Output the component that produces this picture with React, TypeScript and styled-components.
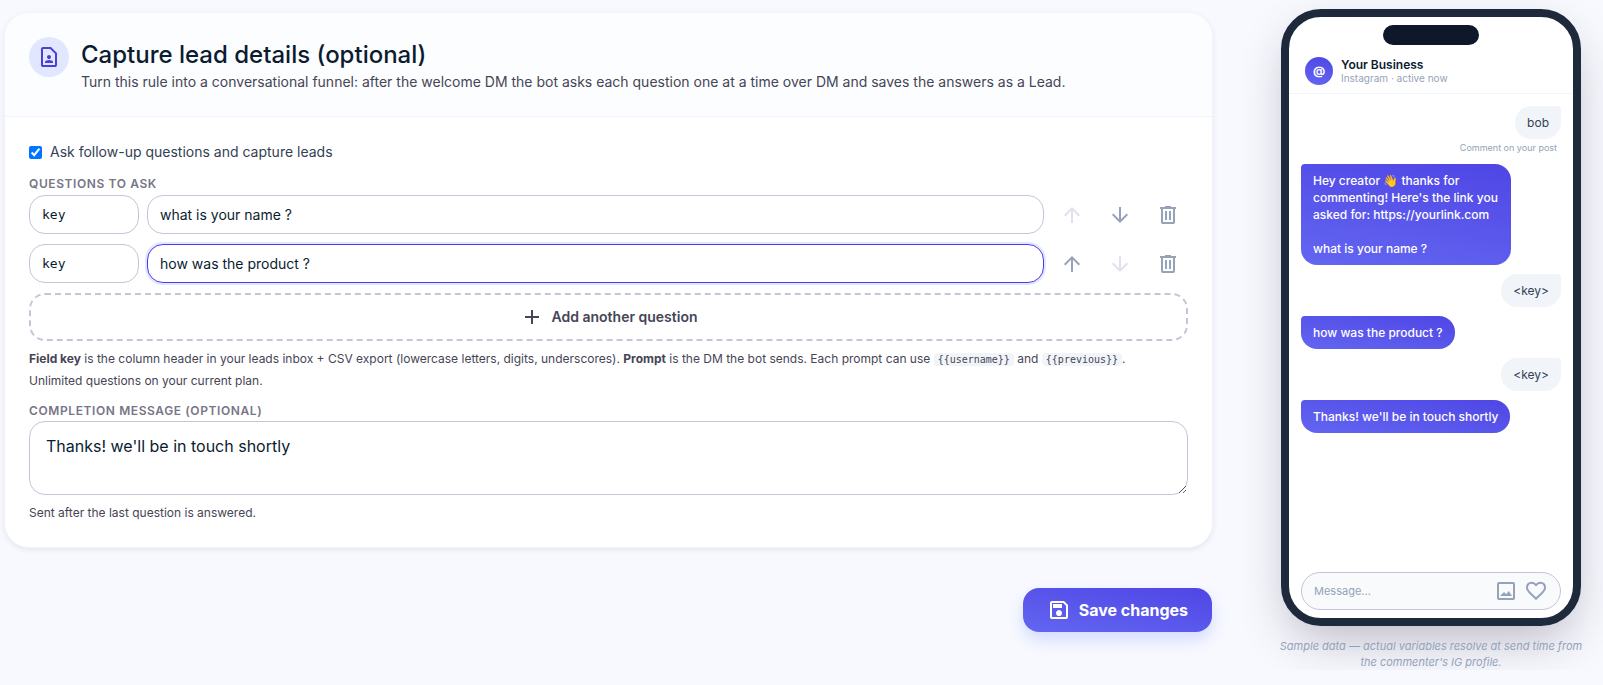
import React, { useState } from "react";
import styled, { createGlobalStyle, css } from "styled-components";

const GlobalStyle = createGlobalStyle`
  *, *::before, *::after { box-sizing: border-box; }
  body {
    margin: 0;
    background: #f8f9ff;
    color: #0b1c30;
    font-family: Inter, "Liberation Sans", sans-serif;
    font-size: 14px;
    line-height: 20px;
  }
  input, textarea, button { font: inherit; color: inherit; }
`;

const icons = {
  contact:
    "M480-400q33 0 56.500-23.500T560-480q0-33-23.500-56.500T480-560q-33 0-56.500 23.500T400-480q0 33 23.500 56.500T480-400ZM320-240h320v-23q0-24-13-44t-36-30q-26-11-53.500-17t-57.500-6q-30 0-57.500 6T369-337q-23 10-36 30t-13 44v23ZM720-80H240q-33 0-56.500-23.500T160-160v-640q0-33 23.500-56.500T240-880h320l240 240v480q0 33-23.500 56.500T720-80Zm0-80v-446L526-800H240v640h480Z",
  up: "M440-160v-487L216-423l-56-57 320-320 320 320-56 57-224-224v487h-80Z",
  down: "M440-800v487L216-537l-56 57 320 320 320-320-56-57-224 224v-487h-80Z",
  trash:
    "M280-120q-33 0-56.500-23.500T200-200v-520h-40v-80h200v-40h240v40h200v80h-40v520q0 33-23.500 56.500T680-120H280Zm400-600H280v520h400v-520ZM360-280h80v-360h-80v360Zm160 0h80v-360h-80v360Z",
  add: "M440-440H200v-80h240v-240h80v240h240v80H520v240h-80v-240Z",
  save: "M840-680v480q0 33-23.500 56.500T760-120H200q-33 0-56.500-23.500T120-200v-560q0-33 23.500-56.500T200-840h480l160 160Zm-80 34L646-760H200v560h560v-446ZM480-240q50 0 85-35t35-85q0-50-35-85t-85-35q-50 0-85 35t-35 85q0 50 35 85t85 35ZM240-560h360v-160H240v160Z",
  image:
    "M200-120q-33 0-56.500-23.500T120-200v-560q0-33 23.500-56.500T200-840h560q33 0 56.500 23.500T840-760v560q0 33-23.500 56.500T760-120H200Zm0-80h560v-560H200v560Zm40-80h480L590-480l-100 130-90-90-160 160Z",
  heart:
    "m480-120-58-52q-101-91-167-157T150-447.500Q111-500 95.500-544T80-634q0-94 63-157t157-63q52 0 99 22t81 62q34-40 81-62t99-22q94 0 157 63t63 157q0 46-15.500 90T810-447.500Q771-395 705-329T538-172l-58 52Zm0-108q96-86 158-147.500t98-107q36-45.500 50-81t14-70.500q0-60-40-100t-100-40q-47 0-87 26.500T518-680h-76q-15-41-55-67.500T300-774q-60 0-100 40t-40 100q0 35 14 70.500t50 81q36 45.500 98 107T480-228Z",
};

const Icon = ({ name, size = 24 }: { name: keyof typeof icons; size?: number }) => (
  <svg width={size} height={size} viewBox="0 -960 960 960" fill="currentColor" aria-hidden="true">
    <path d={icons[name]} />
  </svg>
);

const Page = styled.div`
  display: flex;
  align-items: flex-start;
  gap: 69px;
  padding: 9px 22px 0 5px;
`;

const Main = styled.main`
  flex: 1;
  min-width: 0;
  display: flex;
  flex-direction: column;
  gap: 41px;
  padding-top: 4px;
`;

const Card = styled.section`
  border-radius: 24px;
  background: #ffffff;
  overflow: hidden;
  box-shadow: 0 0 0 1px #f1f5fb, 0 2px 6px rgba(15, 23, 42, 0.1);
`;

const CardHeader = styled.header`
  display: flex;
  gap: 12px;
  padding: 24px;
  background: #fcfdff;
  border-bottom: 1px solid #eff3fb;
`;

const HeaderIcon = styled.span`
  flex: none;
  display: grid;
  place-items: center;
  width: 40px;
  height: 40px;
  border-radius: 50%;
  background: #e0e7ff;
  color: #4d3fd6;
`;

const Title = styled.h2`
  margin: 0;
  font-size: 24px;
  font-weight: 500;
  line-height: 35px;
`;

const Subtitle = styled.p`
  margin: 0;
  color: #464555;
`;

const CardBody = styled.div`
  display: flex;
  flex-direction: column;
  padding: 23px 24px 24px;
`;

const CheckRow = styled.label`
  display: flex;
  align-items: center;
  gap: 8px;
  height: 24px;
  color: #334155;

  input {
    width: 13px;
    height: 13px;
    margin: 0;
  }
`;

const FieldLabel = styled.label`
  font-size: 12px;
  font-weight: 600;
  letter-spacing: 0.05em;
  line-height: 16px;
  text-transform: uppercase;
  color: #777587;
`;

const Fieldset = styled.div`
  display: flex;
  flex-direction: column;
  margin-top: 12px;
`;

const QuestionList = styled.div`
  display: flex;
  flex-direction: column;
  gap: 10px;
  margin: 3px 0 10px;
`;

const QuestionRow = styled.div`
  display: flex;
  gap: 8px;
`;

const fieldBox = css`
  border: 1px solid #c7c4d8;
  border-radius: 16px;
  background: #ffffff;
  outline: none;

  &:focus {
    border-color: #4f39f0;
    box-shadow: 0 0 0 2px #e0e7ff;
  }
`;

const TextField = styled.input<{ $mono?: boolean }>`
  ${fieldBox}
  height: 39px;
  padding: 0 12px;
  min-width: 0;
  ${(p) =>
    p.$mono
      ? css`
          width: 110px;
          font-family: "DejaVu Sans Mono", monospace;
          font-size: 13px;
        `
      : css`
          flex: 1;
        `}
`;

const IconButton = styled.button`
  display: grid;
  place-items: center;
  width: 40px;
  height: 40px;
  margin-bottom: -1px;
  padding: 0;
  border: 0;
  background: none;
  color: #94a3b8;
  cursor: pointer;

  &:disabled {
    opacity: 0.3;
    cursor: default;
  }
`;

const AddButton = styled.button`
  display: flex;
  align-items: center;
  justify-content: center;
  gap: 8px;
  height: 48px;
  border: 2px dashed #c7c4d8;
  border-radius: 16px;
  background: none;
  color: #464555;
  font-weight: 600;
  cursor: pointer;
`;

const Help = styled.p`
  margin: 7px 0 0;
  color: #464555;
  font-size: 12px;
  line-height: 21px;
`;

const Code = styled.code`
  padding: 1px 4px;
  border-radius: 4px;
  background: #f1f5f9;
  font-family: "DejaVu Sans Mono", monospace;
  font-size: 10px;
`;

const MessageArea = styled.textarea`
  ${fieldBox}
  display: block;
  height: 74px;
  margin-top: 2px;
  padding: 12px 16px;
  font-size: 16px;
  line-height: 24px;
  resize: vertical;
`;

const SaveButton = styled.button`
  align-self: flex-end;
  display: flex;
  align-items: center;
  gap: 8px;
  height: 44px;
  padding: 0 24px;
  border: 0;
  border-radius: 16px;
  background: linear-gradient(10deg, #6366f1, #4f46e5);
  box-shadow: 0 8px 16px #d3dbff;
  color: #ffffff;
  font-size: 16px;
  font-weight: 700;
  cursor: pointer;
`;

const Preview = styled.aside`
  flex: none;
  width: 300px;
`;

const Phone = styled.div`
  display: flex;
  flex-direction: column;
  min-height: 617px;
  border: 8px solid #1e293b;
  border-radius: 40px;
  background: #ffffff;
  box-shadow: 0 20px 50px -10px rgba(30, 20, 40, 0.3);
`;

const Notch = styled.div`
  align-self: center;
  width: 96px;
  height: 20px;
  margin-top: 8px;
  border-radius: 10px;
  background: #0f172a;
`;

const ChatHeader = styled.div`
  display: flex;
  align-items: center;
  gap: 8px;
  padding: 12px 16px 8px;
  border-bottom: 1px solid #f1f5f9;
`;

const Avatar = styled.span`
  display: grid;
  place-items: center;
  width: 28px;
  height: 28px;
  border-radius: 50%;
  background: linear-gradient(10deg, #6366f1, #4f46e5);
  color: #ffffff;
  font-size: 12px;
  font-weight: 700;
`;

const Business = styled.div`
  font-size: 12px;
  font-weight: 600;
  line-height: 15px;
`;

const Status = styled.div`
  color: #94a3b8;
  font-size: 10px;
  line-height: 13px;
`;

const Chat = styled.div`
  flex: 1;
  display: flex;
  flex-direction: column;
  gap: 9px;
  padding: 12px;
`;

const Bubble = styled.div<{ $sent?: boolean }>`
  max-width: 210px;
  padding: 8px 12px;
  font-size: 12px;
  line-height: 17px;
  white-space: pre-line;
  ${(p) =>
    p.$sent
      ? css`
          align-self: flex-start;
          border-radius: 4px 16px 16px 16px;
          background: linear-gradient(10deg, #6366f1, #4f46e5);
          color: #ffffff;
          font-weight: 500;
        `
      : css`
          align-self: flex-end;
          border-radius: 16px 4px 16px 16px;
          background: #f1f5f9;
          color: #334155;
        `}
`;

const BubbleGroup = styled.div`
  display: flex;
  flex-direction: column;
`;

const BubbleNote = styled.span`
  align-self: flex-end;
  padding: 3px 4px 1px;
  color: #94a3b8;
  font-size: 9px;
  line-height: 12px;
`;

const Composer = styled.div`
  display: flex;
  align-items: center;
  gap: 6px;
  height: 38px;
  margin: 0 12px 8px;
  padding: 0 12px;
  border: 1px solid #c7c4d8;
  border-radius: 19px;
  background: #f8fafc;
  color: #94a3b8;

  input {
    flex: 1;
    min-width: 0;
    padding: 0;
    border: 0;
    outline: none;
    background: none;
    font-size: 11px;
  }

  input::placeholder { color: #94a3b8; }
`;

const Disclaimer = styled.p`
  margin: 12px -4px 0;
  color: #94a3b8;
  font-size: 11px;
  font-style: italic;
  line-height: 16px;
  text-align: center;
`;

type Question = { id: number; key: string; prompt: string };

export default function App() {
  const [enabled, setEnabled] = useState(true);
  const [completion, setCompletion] = useState("Thanks! we'll be in touch shortly");
  const [questions, setQuestions] = useState<Question[]>([
    { id: 1, key: "key", prompt: "what is your name ?" },
    { id: 2, key: "key", prompt: "how was the product ?" },
  ]);

  const update = (id: number, patch: Partial<Question>) =>
    setQuestions((list) => list.map((q) => (q.id === id ? { ...q, ...patch } : q)));

  const move = (index: number, step: number) =>
    setQuestions((list) => {
      const next = [...list];
      [next[index], next[index + step]] = [next[index + step], next[index]];
      return next;
    });

  return (
    <>
      <GlobalStyle />
      <Page>
        <Main>
          <Card>
            <CardHeader>
              <HeaderIcon>
                <Icon name="contact" />
              </HeaderIcon>
              <div>
                <Title>Capture lead details (optional)</Title>
                <Subtitle>
                  Turn this rule into a conversational funnel: after the welcome DM the bot asks each
                  question one at a time over DM and saves the answers as a Lead.
                </Subtitle>
              </div>
            </CardHeader>
            <CardBody>
              <CheckRow>
                <input type="checkbox" checked={enabled} onChange={(e) => setEnabled(e.target.checked)} />
                Ask follow-up questions and capture leads
              </CheckRow>
              <Fieldset>
                <FieldLabel as="span">Questions to ask</FieldLabel>
                <QuestionList>
                  {questions.map((q, i) => (
                    <QuestionRow key={q.id}>
                      <TextField
                        $mono
                        aria-label="Field key"
                        value={q.key}
                        onChange={(e) => update(q.id, { key: e.target.value })}
                      />
                      <TextField
                        aria-label="Prompt"
                        autoFocus={q.id === 2}
                        value={q.prompt}
                        onChange={(e) => update(q.id, { prompt: e.target.value })}
                      />
                      <IconButton aria-label="Move up" disabled={i === 0} onClick={() => move(i, -1)}>
                        <Icon name="up" />
                      </IconButton>
                      <IconButton
                        aria-label="Move down"
                        disabled={i === questions.length - 1}
                        onClick={() => move(i, 1)}
                      >
                        <Icon name="down" />
                      </IconButton>
                      <IconButton
                        aria-label="Delete question"
                        onClick={() => setQuestions((list) => list.filter((x) => x.id !== q.id))}
                      >
                        <Icon name="trash" />
                      </IconButton>
                    </QuestionRow>
                  ))}
                </QuestionList>
                <AddButton
                  onClick={() => setQuestions((list) => [...list, { id: Date.now(), key: "", prompt: "" }])}
                >
                  <Icon name="add" />
                  Add another question
                </AddButton>
                <Help>
                  <strong>Field key</strong> is the column header in your leads inbox + CSV export
                  (lowercase letters, digits, underscores). <strong>Prompt</strong> is the DM the bot
                  sends. Each prompt can use <Code>{"{{username}}"}</Code> and{" "}
                  <Code>{"{{previous}}"}</Code>.
                  <br />
                  Unlimited questions on your current plan.
                </Help>
              </Fieldset>
              <Fieldset>
                <FieldLabel htmlFor="completion">Completion message (optional)</FieldLabel>
                <MessageArea
                  id="completion"
                  value={completion}
                  onChange={(e) => setCompletion(e.target.value)}
                />
                <Help>Sent after the last question is answered.</Help>
              </Fieldset>
            </CardBody>
          </Card>
          <SaveButton>
            <Icon name="save" />
            Save changes
          </SaveButton>
        </Main>
        <Preview>
          <Phone>
            <Notch />
            <ChatHeader>
              <Avatar>@</Avatar>
              <div>
                <Business>Your Business</Business>
                <Status>Instagram · active now</Status>
              </div>
            </ChatHeader>
            <Chat>
              <BubbleGroup>
                <Bubble>bob</Bubble>
                <BubbleNote>Comment on your post</BubbleNote>
              </BubbleGroup>
              <Bubble $sent>
                {"Hey creator 👋 thanks for commenting! Here's the link you asked for: https://yourlink.com\n\nwhat is your name ?"}
              </Bubble>
              <Bubble>{"<key>"}</Bubble>
              <Bubble $sent>how was the product ?</Bubble>
              <Bubble>{"<key>"}</Bubble>
              <Bubble $sent>Thanks! we'll be in touch shortly</Bubble>
            </Chat>
            <Composer>
              <input aria-label="Message" placeholder="Message..." />
              <Icon name="image" />
              <Icon name="heart" />
            </Composer>
          </Phone>
          <Disclaimer>
            Sample data — actual variables resolve at send time from the commenter's IG profile.
          </Disclaimer>
        </Preview>
      </Page>
    </>
  );
}
